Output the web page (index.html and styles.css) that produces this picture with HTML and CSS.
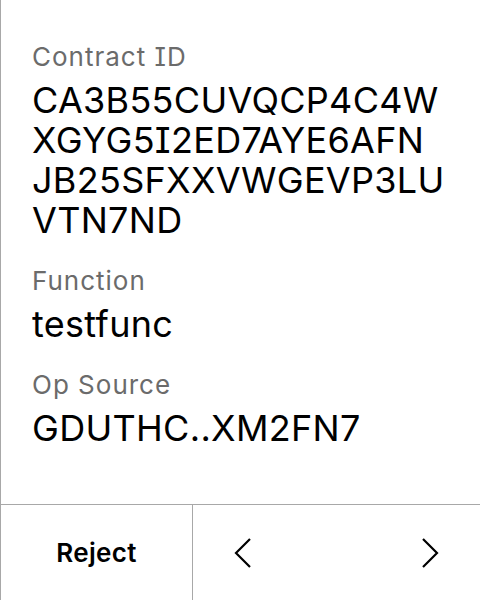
FILE: index.html
```html
<!DOCTYPE html>
<html>
<head>
<meta charset="utf-8">
<link rel="stylesheet" href="styles.css">
</head>
<body>
<div class="screen">
  <div class="content">
    <div class="field">
      <div class="label">Contract ID</div>
      <div class="value">CA3B55CUVQCP4C4W<br>XGYG5I2ED7AYE6AFN<br>JB25SFXXVWGEVP3LU<br>VTN7ND</div>
    </div>
    <div class="field">
      <div class="label">Function</div>
      <div class="value">testfunc</div>
    </div>
    <div class="field">
      <div class="label">Op Source</div>
      <div class="value">GDUTHC..XM2FN7</div>
    </div>
  </div>
  <div class="footer">
    <div class="reject">Reject</div>
    <div class="nav">
      <svg class="chev" width="20" height="32" viewBox="0 0 20 32"><path d="M17 2 L3 16 L17 30" fill="none" stroke="#000" stroke-width="2.2"/></svg>
      <svg class="chev" width="20" height="32" viewBox="0 0 20 32"><path d="M3 2 L17 16 L3 30" fill="none" stroke="#000" stroke-width="2.2"/></svg>
    </div>
  </div>
</div>
</body>
</html>
```
FILE: styles.css
```css
html, body {
  margin: 0;
  padding: 0;
  background: #fff;
}
.screen {
  width: 480px;
  height: 600px;
  box-sizing: border-box;
  border-left: 1px solid #a8a8a8;
  display: flex;
  flex-direction: column;
  font-family: Inter, "Noto Sans", sans-serif;
  font-feature-settings: "cv08";
  color: #000;
}
.content {
  flex: 1;
  padding: 40px 10px 0 31px;
  display: flex;
  flex-direction: column;
  gap: 24px;
}
.label {
  font-size: 26px;
  line-height: 34px;
  letter-spacing: 1px;
  color: #6b6b6b;
  margin-bottom: 6px;
}
.value {
  font-size: 36px;
  line-height: 40px;
  letter-spacing: 0.3px;
  white-space: nowrap;
}
.footer {
  height: 96px;
  border-top: 1px solid #a8a8a8;
  display: flex;
  box-sizing: border-box;
}
.reject {
  width: 191px;
  border-right: 1px solid #a8a8a8;
  display: flex;
  align-items: center;
  justify-content: center;
  font-size: 26px;
  font-weight: 600;
  letter-spacing: 0.3px;
}
.nav {
  flex: 1;
  display: flex;
  align-items: center;
  justify-content: space-between;
  padding: 0 40px;
}
```
